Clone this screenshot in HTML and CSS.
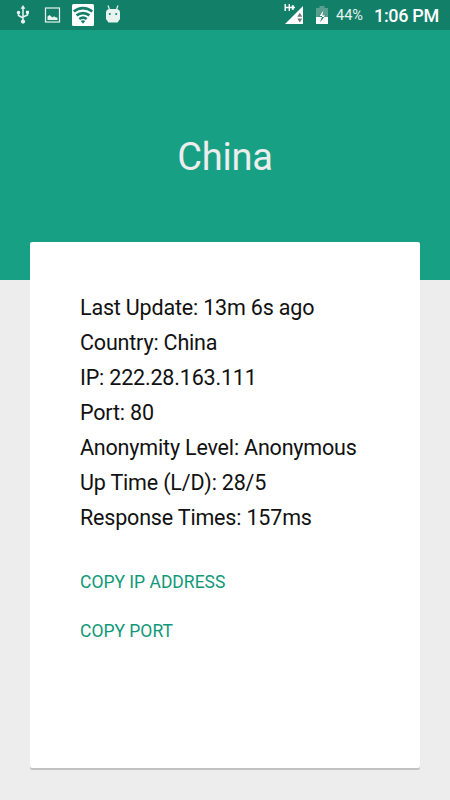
FILE: index.html
```html
<!DOCTYPE html>
<html lang="en">
<head>
    <meta charset="UTF-8">
    <meta name="viewport" content="width=device-width, initial-scale=1.0">
    <title>China</title>
    <link rel="stylesheet" href="styles.css">
</head>
<body>
    <div class="status-bar">
        <div class="notifications">
            <!-- usb -->
            <svg class="icon-usb" width="14" height="20" viewBox="0 0 14 20">
                <path d="M7 3v13M2.5 8v2.5L7 13M11.5 8v2L7 12" fill="none" stroke="currentColor" stroke-width="1.5"/>
                <path d="M7 0l2.4 3.8H4.6z" fill="currentColor"/>
                <circle cx="2.5" cy="7.5" r="1.7" fill="currentColor"/>
                <rect x="10" y="5.8" width="3" height="3" fill="currentColor"/>
                <circle cx="7" cy="16.6" r="2.1" fill="currentColor"/>
            </svg>
            <!-- picture -->
            <svg class="icon-picture" width="17" height="16" viewBox="0 0 17 16">
                <rect x="1.5" y="1" width="14" height="14" fill="none" stroke="currentColor" stroke-width="1.2"/>
                <path d="M3.5 13V9.5l2-1.5 3 2.5 1.5-1.2 1.5 1 2 .5V13z" fill="currentColor"/>
            </svg>
            <!-- wifi -->
            <svg class="icon-wifi" width="22" height="22" viewBox="0 0 22 22">
                <rect width="22" height="22" rx="1.5" fill="#fff"/>
                <path d="M1.8 7.6a14 14 0 0 1 18.4 0M4.6 11.4a10 10 0 0 1 12.8 0M7.3 15a6 6 0 0 1 7.4 0" fill="none" stroke="#128069" stroke-width="2.7"/>
                <path d="M8.7 17a4 4 0 0 1 4.6 0L11 19.8z" fill="#128069"/>
            </svg>
            <!-- android debug -->
            <svg class="icon-debug" width="16" height="18" viewBox="0 0 16 18">
                <path d="M3 0.5l1.5 4M13 0.5l-1.5 4" stroke="currentColor" stroke-width="1.2"/>
                <path d="M1 8C1 5 2.5 4 5 4h6c2.5 0 4 1 4 4v6l-2.5 3.5h-9L1 14z" fill="currentColor"/>
                <circle cx="4.8" cy="9" r="1" fill="#128069"/>
                <circle cx="11.2" cy="9" r="1" fill="#128069"/>
            </svg>
        </div>
        <div class="system">
            <!-- signal -->
            <svg class="icon-signal" width="20" height="22" viewBox="0 0 20 22">
                <path d="M19 3v18H1z" fill="#fff"/>
                <path d="M1.2 1v7M5.3 1v7M1.2 4.5h9.8" fill="none" stroke="#fff" stroke-width="1.4"/>
                <path d="M8.8 2.2v4.6" stroke="#fff" stroke-width="2"/>
                <path d="M15.8 9.8l2.5 4h-5zM15.8 19.5l2.5-4h-5z" fill="#777"/>
            </svg>
            <!-- battery -->
            <svg class="icon-battery" width="12" height="18" viewBox="0 0 12 18">
                <path d="M3.5 0h5v2H12v16H0V2h3.5z" fill="#589f90"/>
                <path d="M0 11h12v7H0z" fill="#fff"/>
                <path d="M7 4L2.5 10.5H5V11h1l-2 5.5L9.5 9h-3z" fill="#128069"/>
                <path d="M7.2 4.5L3.5 10H6v1h2l1-1.8H6.5z" fill="#fff"/>
            </svg>
            <span class="battery-level">44%</span>
            <span class="clock">1:06 PM</span>
        </div>
    </div>

    <header class="header">
        <h1>China</h1>
    </header>

    <main class="card">
        <ul class="details">
            <li>Last Update: 13m 6s ago</li>
            <li>Country: China</li>
            <li>IP: 222.28.163.111</li>
            <li>Port: 80</li>
            <li>Anonymity Level: Anonymous</li>
            <li>Up Time (L/D): 28/5</li>
            <li>Response Times: 157ms</li>
        </ul>
        <div class="actions">
            <button class="btn">COPY IP ADDRESS</button>
            <button class="btn">COPY PORT</button>
        </div>
    </main>
</body>
</html>
```

FILE: styles.css
```css
:root {
    --primary: #18a085;
    --primary-dark: #128069;
    --bg-color: #ededed;
    --text-color: #111111;
}

* {
    margin: 0;
    padding: 0;
    box-sizing: border-box;
}

body {
    height: 800px;
    overflow: hidden;
    font-family: Roboto, sans-serif;
    background-color: var(--bg-color);
    color: var(--text-color);
}

.status-bar {
    display: flex;
    justify-content: space-between;
    height: 30px;
    padding: 0 11px 0 16px;
    background-color: var(--primary-dark);
    color: #e8f3f0;
}

.notifications,
.system {
    display: flex;
    align-items: center;
}

.icon-picture {
    margin-left: 14px;
}

.icon-wifi {
    margin-left: 11px;
}

.icon-debug {
    margin-left: 11px;
    margin-bottom: 3px;
}

.icon-signal {
    margin-bottom: 2px;
}

.icon-battery {
    margin-left: 12px;
}

.battery-level {
    margin-left: 8px;
    font-size: 14.5px;
    line-height: 33px;
}

.clock {
    margin-left: 11px;
    font-size: 18px;
    font-weight: 500;
    letter-spacing: -0.3px;
    line-height: 33px;
    color: #ffffff;
}

.header {
    height: 250px;
    padding-top: 102px;
    background-color: var(--primary);
    text-align: center;
}

.header h1 {
    font-size: 38px;
    font-weight: 400;
    letter-spacing: -0.2px;
    line-height: 51px;
    color: #ededed;
}

.card {
    position: relative;
    height: 526px;
    margin: -38px 30px 0;
    padding: 48px 50px;
    background-color: #ffffff;
    border-radius: 2px;
    box-shadow: 0 2px 0 #c2c2c2;
}

.details {
    list-style: none;
    font-size: 21.5px;
    letter-spacing: -0.18px;
    line-height: 35px;
    white-space: nowrap;
}

.actions {
    display: flex;
    flex-direction: column;
    align-items: flex-start;
    margin-top: 22px;
}

.btn {
    height: 49px;
    border: none;
    background: none;
    font-family: inherit;
    font-size: 17.5px;
    color: #109878;
    cursor: pointer;
}
```
